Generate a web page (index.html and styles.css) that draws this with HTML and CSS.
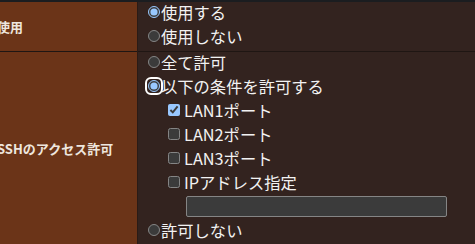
FILE: index.html
```html
<!DOCTYPE html>
<html lang="ja">
    <head>
        <title>SSH設定</title>
        <link rel="stylesheet" href="styles.css">
    </head>
    <body>
        <table class="settings">
            <tr>
                <th class="label">使用</th>
                <td class="value">
                    <label class="opt"><input type="radio" name="use" checked>使用する</label>
                    <label class="opt"><input type="radio" name="use">使用しない</label>
                </td>
            </tr>
            <tr>
                <th class="label">SSHのアクセス許可</th>
                <td class="value">
                    <label class="opt"><input type="radio" name="acl">全て許可</label>
                    <label class="opt"><span class="ring"><input type="radio" name="acl" checked></span>以下の条件を許可する</label>
                    <div class="sub">
                        <label class="opt"><input type="checkbox" checked>LAN1ポート</label>
                        <label class="opt"><input type="checkbox">LAN2ポート</label>
                        <label class="opt"><input type="checkbox">LAN3ポート</label>
                        <label class="opt"><input type="checkbox">IPアドレス指定</label>
                        <input type="text" class="ip">
                    </div>
                    <label class="opt"><input type="radio" name="acl">許可しない</label>
                </td>
            </tr>
        </table>
    </body>
</html>
```

FILE: styles.css
```css
body {
    margin: 0;
    background: #33231f;
    font-family: "Noto Sans CJK JP", "Noto Sans", sans-serif;
    overflow: hidden;
}

.settings {
    border-collapse: collapse;
    border-top: 2px solid #1b1d20;
    margin-left: -3px;
    width: 478px;
}

.settings tr + tr {
    border-top: 1px solid #1f1613;
}

.label {
    width: 140px;
    padding: 0;
    background: #6b3418;
    border-right: 1px solid #2a1b16;
    color: #eee6de;
    font-size: 13px;
    font-weight: bold;
    text-align: left;
    vertical-align: middle;
}

.value {
    padding: 0 0 3px 10px;
    color: #f2f2f2;
    font-size: 16.3px;
    line-height: 24px;
    vertical-align: top;
}

.opt {
    display: flex;
    align-items: center;
    height: 24px;
}

.value > .opt:first-child {
    margin-top: -2px;
}

input {
    color-scheme: dark;
    accent-color: #99c8ff;
    margin: 0 1px 0 0;
}

input[type="radio"] {
    width: 12px;
    height: 12px;
}

input[type="checkbox"] {
    width: 12px;
    height: 12px;
    margin-right: 4px;
}

/* focus ring drawn by hand, the page has no focus when photographed */
.ring {
    display: inline-flex;
    padding: 1px;
    margin: -3px -2px -3px -3px;
    border: 2px solid #ffffff;
    border-radius: 6px;
}

.ring input {
    margin: 0;
}

.sub {
    padding-left: 20px;
}

.ip {
    display: block;
    box-sizing: border-box;
    width: 261px;
    height: 21px;
    margin: 2px 0 1px 18px;
    background: #3b3b3b;
    border: 1px solid #858585;
    border-radius: 2px;
}
```
